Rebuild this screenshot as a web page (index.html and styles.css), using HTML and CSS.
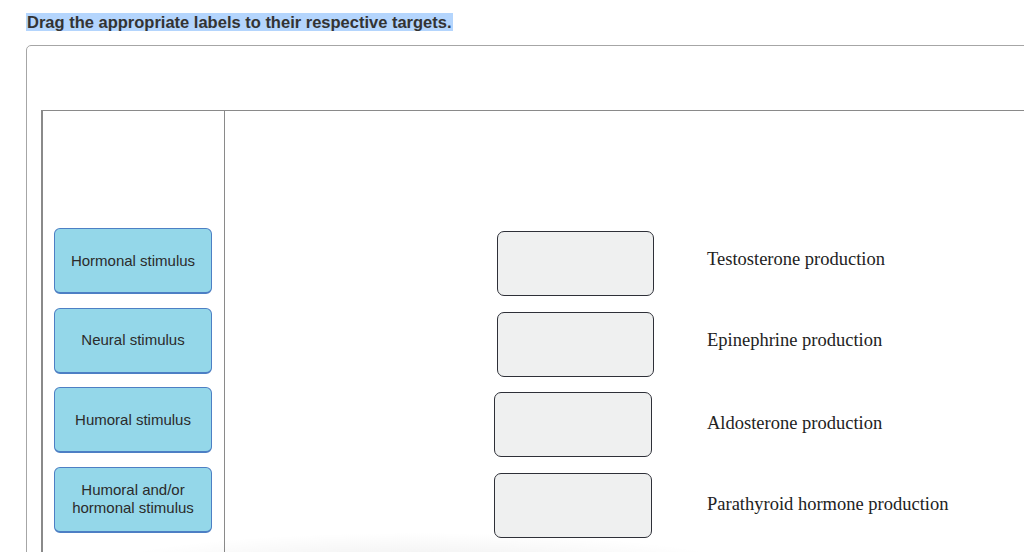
FILE: index.html
```html
<!DOCTYPE html>
<html lang="en">
<head>
    <meta charset="UTF-8">
    <title>Labeling activity</title>
    <link rel="stylesheet" href="styles.css">
</head>
<body>

<p class="prompt"><span>Drag the appropriate labels to their respective targets.</span></p>

<div class="frame">
    <div class="board">
        <div class="bank">
            <div class="chip">Hormonal stimulus</div>
            <div class="chip">Neural stimulus</div>
            <div class="chip">Humoral stimulus</div>
            <div class="chip">Humoral and/or<br>hormonal stimulus</div>
        </div>
        <div class="targets">
            <div class="row">
                <div class="drop"></div>
                <div class="caption up">Testosterone production</div>
            </div>
            <div class="row">
                <div class="drop"></div>
                <div class="caption up">Epinephrine production</div>
            </div>
            <div class="row shifted">
                <div class="drop"></div>
                <div class="caption">Aldosterone production</div>
            </div>
            <div class="row shifted">
                <div class="drop"></div>
                <div class="caption">Parathyroid hormone production</div>
            </div>
        </div>
    </div>
</div>

<div class="shade"></div>

</body>
</html>
```

FILE: styles.css
```css
body {
    margin: 0;
    font-family: "Liberation Sans", Arial, sans-serif;
    overflow: hidden;
    height: 552px;
    position: relative;
}
.prompt {
    margin: 12px 0 0 26px;
    font-size: 16.5px;
    font-weight: bold;
    color: #333;
    line-height: 20px;
}
.prompt span {
    background: #b4d5fd;
    padding: 0 1px;
}
.frame {
    margin: 13px 0 0 26px;
    width: 1100px;
    border: 1px solid #a6a6a6;
    border-radius: 5px;
    padding: 64px 0 0 14px;
}
.board {
    display: grid;
    grid-template-columns: 182px 1fr;
    border-top: 1px solid #8a8a8a;
    border-left: 2px solid #8a8a8a;
    height: 500px;
}
.bank {
    border-right: 1px solid #8a8a8a;
    padding: 117px 0 0 11px;
    display: flex;
    flex-direction: column;
    gap: 13.5px;
}
.chip {
    width: 158px;
    height: 66px;
    box-sizing: border-box;
    background: #94d7e9;
    border: 1px solid #4d7fc4;
    border-bottom-width: 2px;
    border-radius: 6px;
    display: flex;
    align-items: center;
    justify-content: center;
    text-align: center;
    font-size: 15px;
    line-height: 18px;
    color: #2b2b2b;
}
.targets {
    padding: 120px 0 0 0;
    display: flex;
    flex-direction: column;
    gap: 15.7px;
}
.row {
    display: flex;
    align-items: center;
    padding-left: 272px;
}
.row.shifted {
    padding-left: 269px;
}
.drop {
    width: 157px;
    height: 65px;
    box-sizing: border-box;
    background: #eff0f0;
    border: 1px solid #2e3038;
    border-radius: 7px;
}
.row.shifted .drop {
    width: 158px;
}
.caption {
    margin-left: 53px;
    margin-bottom: 3px;
    font-family: "Liberation Serif", "Times New Roman", serif;
    font-size: 18.5px;
    color: #222;
}
.row.shifted .caption {
    margin-left: 55px;
}
.caption.up {
    margin-bottom: 8px;
}
.shade {
    position: absolute;
    left: 80px;
    bottom: -60px;
    width: 680px;
    height: 80px;
    border-radius: 50%;
    background: radial-gradient(ellipse at center, rgba(0,0,0,0.08), rgba(0,0,0,0) 70%);
    pointer-events: none;
}
```
